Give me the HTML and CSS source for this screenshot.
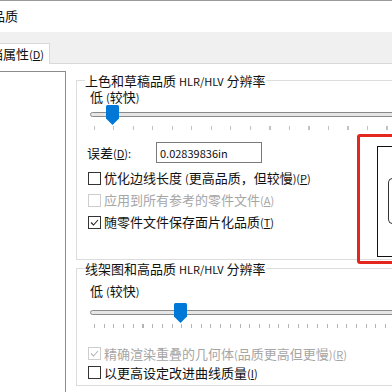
FILE: index.html
```html
<!DOCTYPE html>
<html lang="zh-CN">
<head>
    <meta charset="UTF-8">
    <title>文档属性 - 图像品质</title>
    <link rel="stylesheet" href="styles.css">
</head>
<body>
    <div class="titlebar">图像品质</div>
    <div class="tabstrip">
        <div class="tab">文档属性<span class="en">(<u>D</u>)</span></div>
    </div>
    <div class="content">
        <div class="tree"></div>
        <div class="main">
            <div class="group group-shaded">
                <div class="group-title">上色和草稿品质 <span class="en">HLR/HLV</span> 分辨率</div>
                <div class="slider-label">低 <span class="en">(</span>较快<span class="en">)</span></div>
                <div class="slider">
                    <div class="track"></div>
                    <svg class="thumb" style="left: 16px" width="13" height="20" viewBox="0 0 13 20">
                        <path d="M1.5 0 H11.5 Q13 0 13 1.5 V13.5 L6.5 20 L0 13.5 V1.5 Q0 0 1.5 0 Z" fill="#0078d7"/>
                    </svg>
                </div>
                <div class="ticks ticks-wide"></div>
                <div class="group-body">
                    <div class="form">
                        <div class="field">
                            <label class="field-label">误差<span class="en">(<u>D</u>):</span></label>
                            <div class="input"><span class="en">0.02839836in</span></div>
                        </div>
                        <div class="check first">
                            <span class="box"></span>
                            <span>优化边线长度 <span class="en">(</span>更高品质，但较慢<span class="en">)(<u>P</u>)</span></span>
                        </div>
                        <div class="check disabled">
                            <span class="box"></span>
                            <span>应用到所有参考的零件文件<span class="en">(<u>A</u>)</span></span>
                        </div>
                        <div class="check">
                            <span class="box">
                                <svg width="11" height="11" viewBox="0 0 11 11"><path d="M2 5.5 L4.5 8 L9 3" fill="none" stroke="#222" stroke-width="1.1"/></svg>
                            </span>
                            <span>随零件文件保存面片化品质<span class="en">(<u>T</u>)</span></span>
                        </div>
                    </div>
                    <div class="preview">
                        <div class="preview-shape"></div>
                    </div>
                </div>
                <div class="highlight"></div>
            </div>

            <div class="group group-wire">
                <div class="group-title">线架图和高品质 <span class="en">HLR/HLV</span> 分辨率</div>
                <div class="slider-label label-low">低 <span class="en">(</span>较快<span class="en">)</span></div>
                <div class="slider slider-low">
                    <div class="track"></div>
                    <svg class="thumb" style="left: 84px" width="13" height="20" viewBox="0 0 13 20">
                        <path d="M1.5 0 H11.5 Q13 0 13 1.5 V13.5 L6.5 20 L0 13.5 V1.5 Q0 0 1.5 0 Z" fill="#0078d7"/>
                    </svg>
                </div>
                <div class="ticks ticks-fine"></div>
                <div class="check tight disabled spaced">
                    <span class="box">
                        <svg width="11" height="11" viewBox="0 0 11 11"><path d="M2 5.5 L4.5 8 L9 3" fill="none" stroke="#b5b5b5" stroke-width="1.1"/></svg>
                    </span>
                    <span>精确渲染重叠的几何体<span class="en">(</span>品质更高但更慢<span class="en">)(<u>R</u>)</span></span>
                </div>
                <div class="check tight">
                    <span class="box"></span>
                    <span>以更高设定改进曲线质量<span class="en">(<u>I</u>)</span></span>
                </div>
            </div>
        </div>
    </div>
</body>
</html>
```

FILE: styles.css
```css
* {
    margin: 0;
    padding: 0;
    box-sizing: border-box;
}
body {
    width: 392px;
    height: 392px;
    overflow: hidden;
    background: #fff;
    color: #111;
    font-family: "Noto Sans CJK SC", sans-serif;
    font-size: 13px;
    line-height: 16px;
}
.en {
    font-size: 11px;
}
.titlebar {
    height: 32px;
    border-top: 1px solid #9a9a9a;
    line-height: 29px;
    text-indent: -34px;
    white-space: nowrap;
}
.tabstrip {
    height: 31px;
    background: #f0f0f0;
    display: flex;
    align-items: flex-end;
}
.tab {
    width: 50px;
    height: 21px;
    margin-bottom: -1px;
    background: #fff;
    border-top: 1px solid #d9d9d9;
    border-right: 1px solid #d9d9d9;
    line-height: 19px;
    text-indent: -23px;
    white-space: nowrap;
    overflow: hidden;
    position: relative;
}
.content {
    border-top: 1px solid #d9d9d9;
    display: flex;
    height: 329px;
    overflow: hidden;
}
.tree {
    flex: none;
    width: 66px;
    margin-top: 7px;
    border-top: 1px solid #8c8c8c;
    border-right: 1px solid #8c8c8c;
}
.main {
    flex: none;
    padding: 16px 0 0 10px;
}
.group {
    width: 360px;
    border: 1px solid #dcdcdc;
    position: relative;
}
.group-shaded {
    height: 180px;
}
.group-wire {
    height: 118px;
    margin-top: 8px;
}
.group-title {
    width: fit-content;
    margin: -8px 0 0 8px;
    line-height: 16px;
    background: #fff;
    white-space: nowrap;
}
.slider-label {
    padding-left: 13px;
    line-height: 15px;
}
.label-low {
    margin-top: 6px;
    line-height: 16px;
}
.slider {
    position: relative;
    height: 19px;
    margin-left: 13px;
}
.slider-low {
    margin-top: 4px;
}
.track {
    position: relative;
    top: 7px;
    height: 5px;
    border: 1px solid #8a8a8a;
    border-radius: 3px 0 0 3px;
    background: #e6e6e6;
}
.thumb {
    position: absolute;
    top: 0;
}
.ticks {
    height: 4px;
    margin: 2px 0 0 17px;
}
.ticks-wide {
    background: repeating-linear-gradient(to right, #c2c2c2 0 1px, transparent 1px 19.5px);
}
.ticks-fine {
    background: repeating-linear-gradient(to right, #b4b4b4 0 1px, transparent 1px 9.7px);
}
.group-body {
    display: flex;
    margin-top: 12px;
}
.form {
    width: 300px;
    flex: none;
}
.field {
    display: flex;
    align-items: center;
    height: 21px;
}
.field-label {
    width: 79px;
    padding-left: 10px;
}
.input {
    width: 106px;
    height: 21px;
    border: 1px solid #7a7a7a;
    padding-left: 3px;
    line-height: 19px;
}
.check {
    display: flex;
    align-items: center;
    height: 22px;
    padding-left: 11px;
    white-space: nowrap;
}
.check.first {
    margin-top: 4px;
}
.check.tight {
    height: 19px;
}
.check.spaced {
    margin-top: 16px;
}
.box {
    width: 13px;
    height: 13px;
    border: 1px solid #333;
    margin-right: 3px;
    display: flex;
    align-items: center;
    justify-content: center;
    flex: none;
}
.check.disabled {
    color: #a6a6a6;
}
.check.disabled .box {
    border-color: #cdcdcd;
}
.preview {
    flex: none;
    width: 60px;
    height: 111px;
    margin-top: 4px;
    border: 1px solid #111;
    padding: 31px 0 0 10px;
}
.preview-shape {
    height: 46px;
    border: 1px solid #333;
    border-right: none;
    border-radius: 5px 0 0 5px;
}
.highlight {
    position: absolute;
    left: 280px;
    top: 53px;
    width: 70px;
    height: 130px;
    border: 3px solid #e3261e;
    border-radius: 3px;
}
```
